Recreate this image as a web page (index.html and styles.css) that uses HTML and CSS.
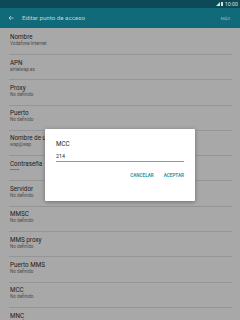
FILE: index.html
```html
<!DOCTYPE html>
<html lang="es">
<head>
<meta charset="utf-8">
<link rel="stylesheet" href="styles.css">
</head>
<body>
<div class="screen">
  <div class="statusbar">
    <svg class="sig" width="4" height="4" viewBox="0 0 4 4"><polygon points="0,4 4,0 4,4" fill="#d6e1e3"/></svg>
    <span class="bat"></span>
    <span class="time">10:00</span>
  </div>
  <div class="toolbar">
    <svg class="back" width="6" height="6" viewBox="0 0 6 6"><path d="M5.5 3H1M3 1L1 3l2 2" stroke="#bcd0d4" stroke-width="0.8" fill="none"/></svg>
    <span class="title">Editar punto de acceso</span>
    <span class="more">MÁS</span>
  </div>
  <div class="list">
    <div class="item"><div class="t">Nombre</div><div class="s">Vodafone Internet</div></div>
    <div class="item"><div class="t">APN</div><div class="s">airtelwap.es</div></div>
    <div class="item"><div class="t">Proxy</div><div class="s">No definido</div></div>
    <div class="item"><div class="t">Puerto</div><div class="s">No definido</div></div>
    <div class="item"><div class="t">Nombre de usuario</div><div class="s">wap@wap</div></div>
    <div class="item"><div class="t">Contraseña</div><div class="s">••••••</div></div>
    <div class="item"><div class="t">Servidor</div><div class="s">No definido</div></div>
    <div class="item"><div class="t">MMSC</div><div class="s">No definido</div></div>
    <div class="item"><div class="t">MMS proxy</div><div class="s">No definido</div></div>
    <div class="item"><div class="t">Puerto MMS</div><div class="s">No definido</div></div>
    <div class="item"><div class="t">MCC</div><div class="s">No definido</div></div>
    <div class="item"><div class="t">MNC</div><div class="s">No definido</div></div>
  </div>
  <div class="dialog">
    <div class="dtitle">MCC</div>
    <div class="input">214</div>
    <div class="actions">
      <span class="btn">CANCELAR</span>
      <span class="btn">ACEPTAR</span>
    </div>
  </div>
</div>
</body>
</html>
```
FILE: styles.css
```css
html, body { margin: 0; padding: 0; }
body { font-family: Roboto, "Liberation Sans", sans-serif; }
.screen {
  position: relative;
  width: 240px;
  height: 320px;
  overflow: hidden;
  background: #a8a8a8;
}
.statusbar {
  height: 8px;
  background: #0b4a56;
  display: flex;
  align-items: center;
  justify-content: flex-end;
  padding-right: 2px;
  gap: 1px;
  color: #dbe4e6;
  font-size: 5.3px;
}
.sig { display: block; }
.bat { width: 2px; height: 4px; background: #d6e1e3; border-radius: 0.3px; margin-right: 0.5px; }
.time { line-height: 8px; }
.toolbar {
  height: 20px;
  background: #116a7a;
  display: flex;
  align-items: center;
  padding-left: 8px;
  padding-right: 10px;
  color: #c3d3d6;
}
.back { display: block; margin-right: 8px; }
.title { font-size: 6.2px; flex: 1; }
.more { font-size: 4.4px; color: #9fbcc2; }
.list { padding-top: 1.7px; }
.item {
  height: 25.3px;
  box-sizing: border-box;
  margin: 0 8px 0 9px;
  padding: 3.6px 0 0 1px;
  border-bottom: 1px solid #959595;
}
.item .t { font-size: 6.3px; line-height: 8px; color: #1c1c1c; white-space: nowrap; }
.item .s { font-size: 4.6px; line-height: 6px; color: #4c4c4c; white-space: nowrap; }
.dialog {
  position: absolute;
  left: 45px;
  top: 129px;
  width: 150px;
  height: 72px;
  box-sizing: border-box;
  background: #ffffff;
  border-radius: 1px;
  box-shadow: 0 1px 4px rgba(0,0,0,0.35);
  padding: 11px 11px 0 11px;
}
.dtitle { font-size: 6.3px; line-height: 8px; color: #1e1e1e; }
.input {
  margin-top: 5px;
  font-size: 5.3px;
  line-height: 7px;
  color: #222;
  border-bottom: 1px solid #44b6c6;
  padding-bottom: 1px;
  width: 128px;
}
.actions {
  display: flex;
  justify-content: flex-end;
  gap: 10px;
  margin-top: 11px;
  width: 128px;
}
.btn { font-size: 4.6px; line-height: 6px; font-weight: bold; color: #2a9db0; }
```
